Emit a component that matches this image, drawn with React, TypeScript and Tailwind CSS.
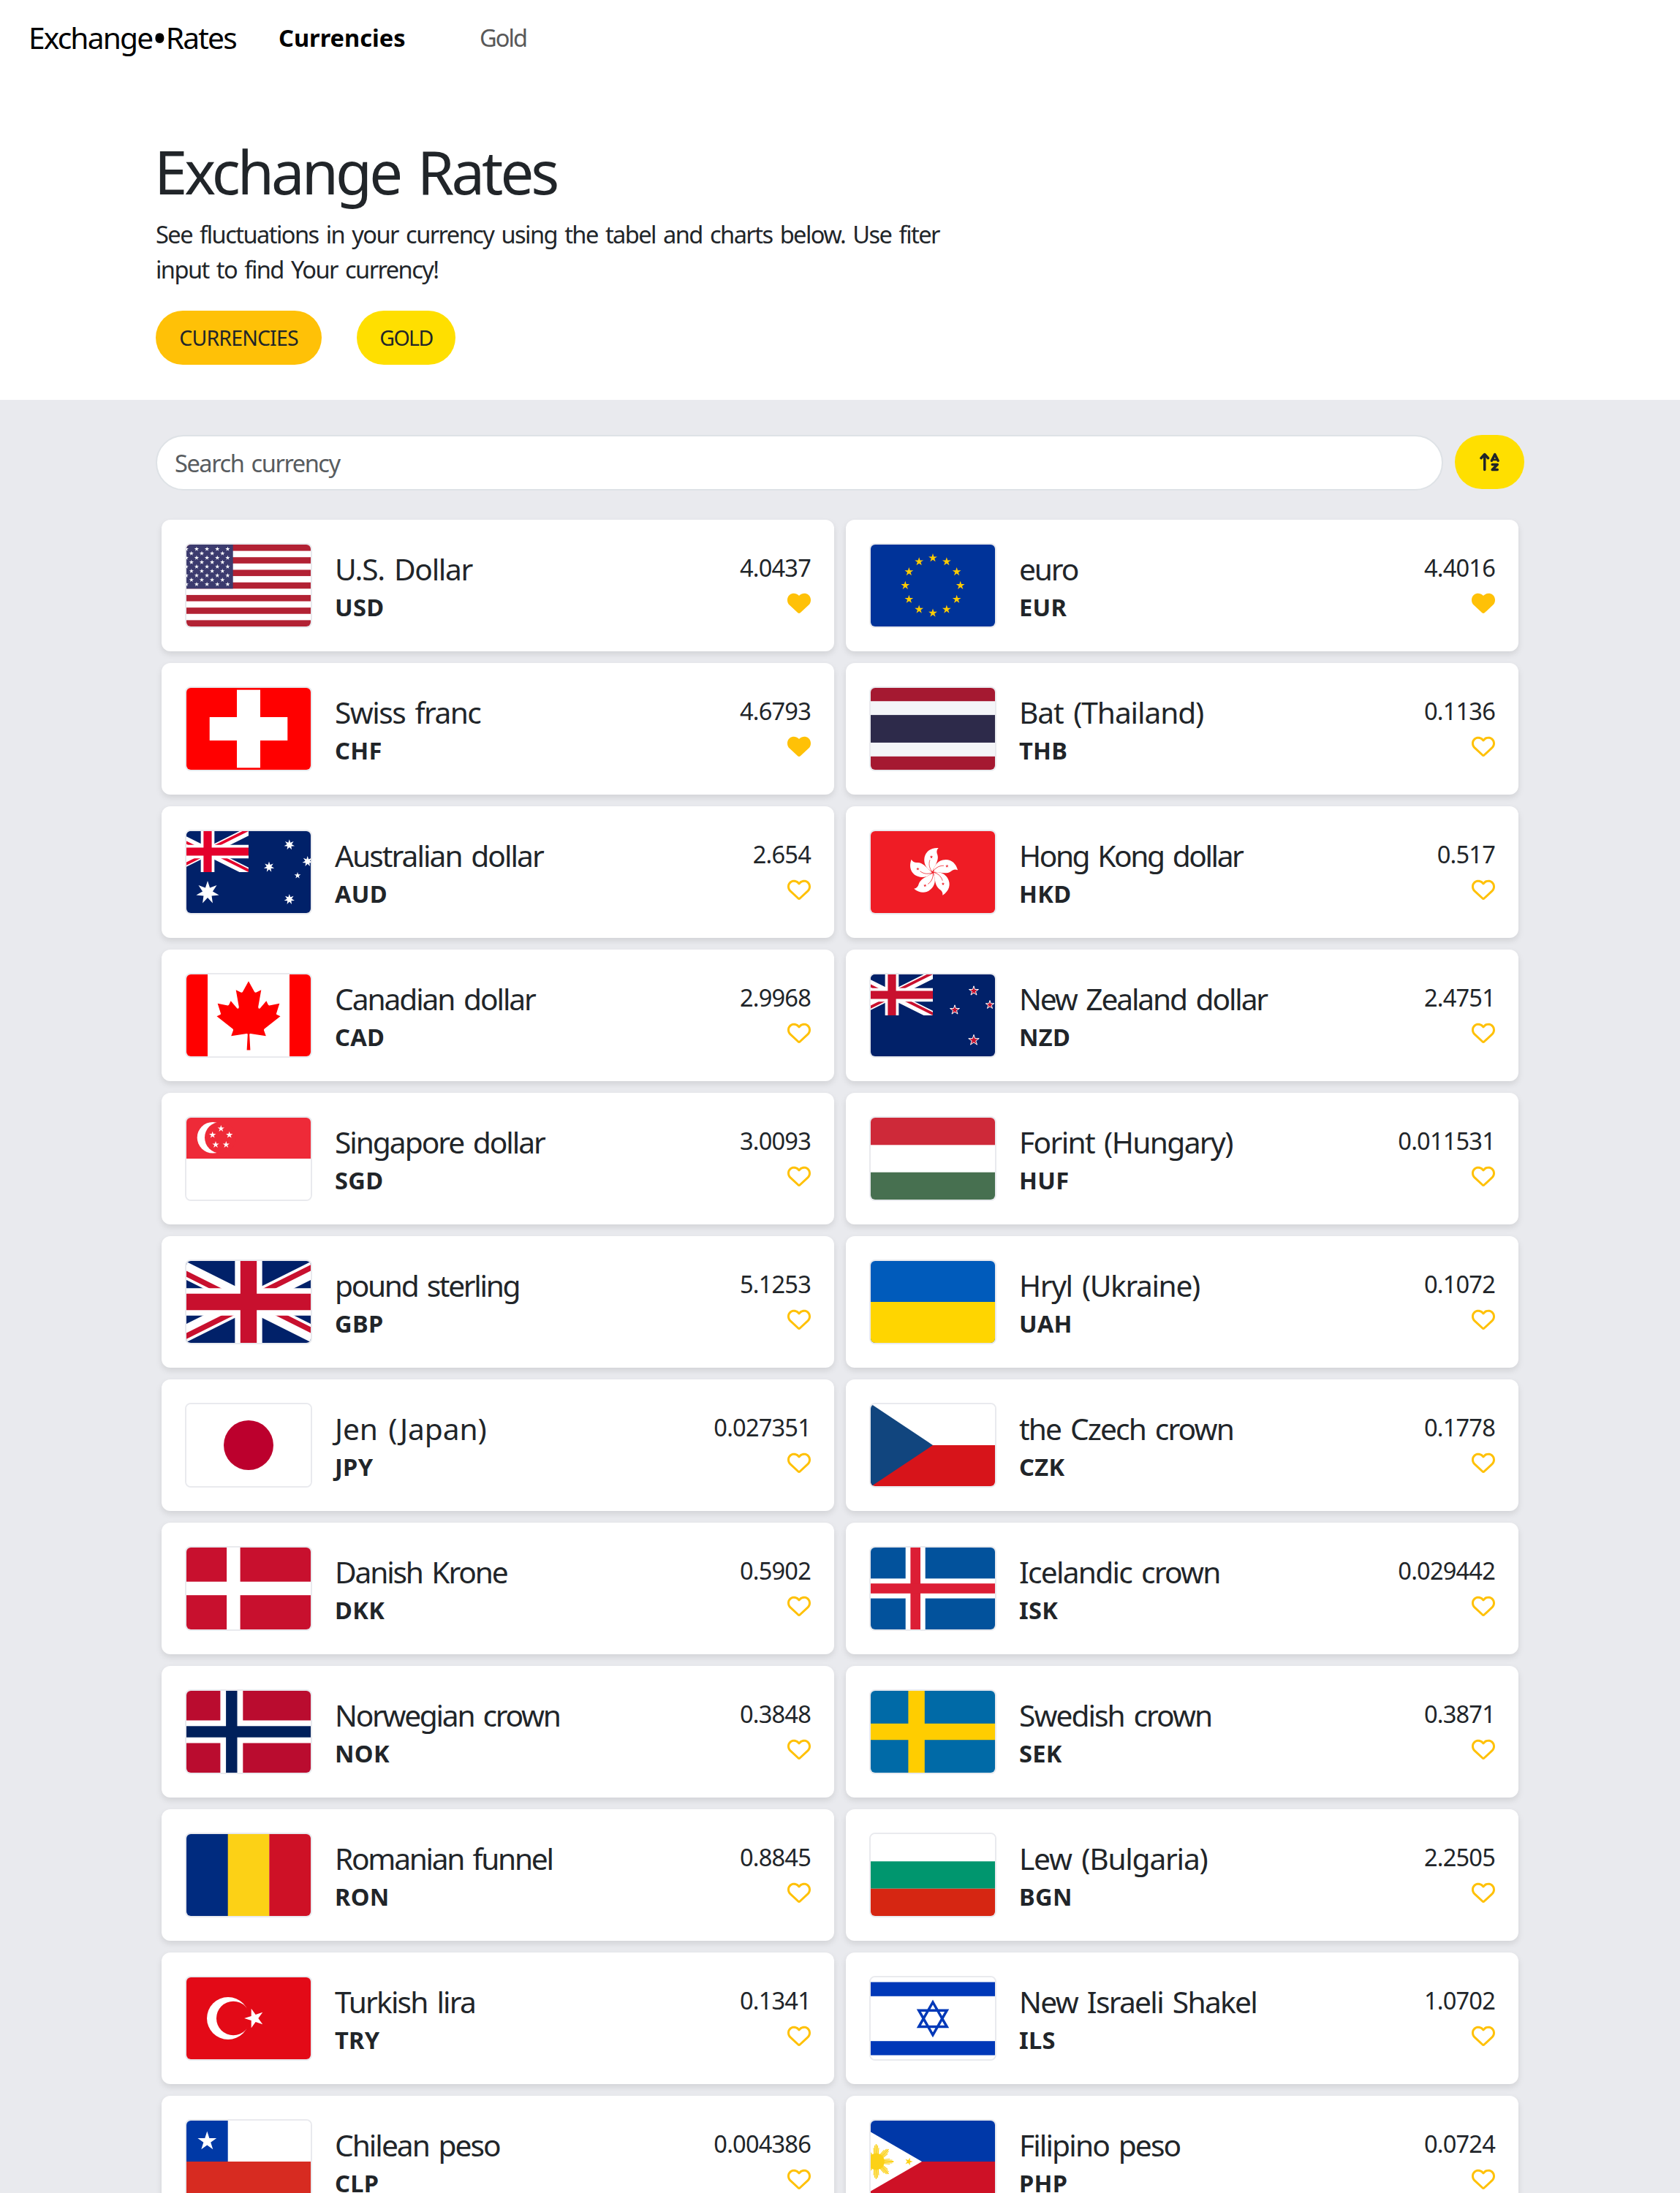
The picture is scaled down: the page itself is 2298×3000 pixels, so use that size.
import React from "react";
import { FaArrowUpAZ, FaHeart, FaRegHeart } from "react-icons/fa6";

function starPoints(cx: number, cy: number, r: number, n = 5, rotation = -90, inner = 0.382): string {
  const points: string[] = [];
  for (let i = 0; i < n * 2; i++) {
    const radius = i % 2 === 0 ? r : r * inner;
    const a = ((rotation + (i * 180) / n) * Math.PI) / 180;
    points.push(`${(cx + radius * Math.cos(a)).toFixed(2)},${(cy + radius * Math.sin(a)).toFixed(2)}`);
  }
  return points.join(" ");
}

type StarProps = { x: number; y: number; r: number; n?: number; rot?: number; inner?: number; fill?: string; stroke?: string; sw?: number };
const Star = ({ x, y, r, n, rot, inner, fill = "#fff", stroke, sw }: StarProps) => (
  <polygon points={starPoints(x, y, r, n, rot, inner)} fill={fill} stroke={stroke} strokeWidth={sw} />
);

const R = ({ x = 0, y = 0, w = 170, h = 112, c }: { x?: number; y?: number; w?: number; h?: number; c: string }) => (
  <rect x={x} y={y} width={w} height={h} fill={c} />
);

const Jack = ({ id, red, blue = "#012169" }: { id: string; red: string; blue?: string }) => (
  <g>
    <clipPath id={id + "-frame"}><path d="M0 0h60v30H0z" /></clipPath>
    <clipPath id={id + "-turn"}><path d="M30 15h30v15zv15H0zH0V0zV0h30z" /></clipPath>
    <g clipPath={`url(#${id}-frame)`}>
      <path d="M0 0h60v30H0z" fill={blue} />
      <path d="M0 0l60 30M60 0L0 30" stroke="#fff" strokeWidth="6" />
      <path d="M0 0l60 30M60 0L0 30" stroke={red} strokeWidth="4" clipPath={`url(#${id}-turn)`} />
      <path d="M30 0v30M0 15h60" stroke="#fff" strokeWidth="10" />
      <path d="M30 0v30M0 15h60" stroke={red} strokeWidth="6" />
    </g>
  </g>
);

function usStars() {
  const out: React.ReactNode[] = [];
  for (let row = 0; row < 9; row++) {
    const count = row % 2 === 0 ? 6 : 5;
    for (let i = 0; i < count; i++) {
      const x = -21.4 + 7.05 + i * 14.15 + (row % 2 === 0 ? 0 : 7.05);
      out.push(<Star key={`${row}-${i}`} x={x} y={6.05 + row * 6.03} r={3.3} />);
    }
  }
  return out;
}

const flags: Record<string, React.ReactNode> = {
  USD: (
    <>
      <R c="#fff" />
      {[0, 1, 2, 3, 4, 5, 6].map((i) => <R key={i} y={i * 17.23} h={8.615} c="#b22234" />)}
      <R w={63.7} h={60.3} c="#3c3b6e" />
      {usStars()}
    </>
  ),
  EUR: (
    <>
      <R c="#003399" />
      {Array.from({ length: 12 }, (_, i) => {
        const a = (i * Math.PI) / 6;
        return <Star key={i} x={85 + 37.7 * Math.sin(a)} y={56 - 37.7 * Math.cos(a)} r={6.2} fill="#ffcc00" />;
      })}
    </>
  ),
  CHF: (<><R c="#ff0000" /><R x={69} y={2.7} w={32} h={106.6} c="#fff" /><R x={31.7} y={40} w={106.6} h={32} c="#fff" /></>),
  THB: (<><R c="#a51931" /><R y={18.2} h={75.6} c="#f4f5f8" /><R y={37.1} h={37.8} c="#2d2a4a" /></>),
  AUD: (
    <>
      <R c="#012169" />
      <g transform="translate(-27 0) scale(1.8667)"><Jack id="au" red="#e4002b" /></g>
      <Star x={29} y={84} r={16} n={7} inner={0.444} />
      <Star x={140.8} y={18.7} r={7.4} n={7} inner={0.444} />
      <Star x={113} y={49} r={7.4} n={7} inner={0.444} />
      <Star x={165.7} y={41.4} r={7.4} n={7} inner={0.444} />
      <Star x={152} y={60.7} r={4.6} />
      <Star x={140.8} y={93.3} r={7.4} n={7} inner={0.444} />
    </>
  ),
  HKD: (
    <>
      <R c="#ef1c25" />
      {[0, 72, 144, 216, 288].map((a) => (
        <g key={a} transform={`translate(85 56.3) rotate(${a})`}>
          <path d="M-.5 -1C-6 -3 -12.4 -9 -11.7 -18C-11 -28 -3 -34 7.7 -33.3C5 -30.5 4.8 -27.5 6.3 -24C8.6 -16 3 -10 -.5 -1z" fill="#fff" />
          <path d="M0 0C-4 -4 -6.5 -10 -4 -17" fill="none" stroke="#ef1c25" strokeWidth=".7" />
          <Star x={-2} y={-21} r={2.3} fill="#ef1c25" />
        </g>
      ))}
    </>
  ),
  CAD: (
    <>
      <R c="#fff" />
      <R w={29} c="#ff0000" />
      <R x={141} w={29} c="#ff0000" />
      <path
        fill="#ff0000"
        d="M85 9.2L93 23.8Q94 25.2 95.6 24.4L102.3 21.3L98.2 44.5Q98.4 48 100.8 46.2L109.3 36.3L111.8 41.6Q112.3 42.6 113.6 42.4L127.3 39.8L123 53.4Q122.7 54.6 123.7 55L128.5 57.3L106.6 74.6Q105.6 75.4 106 76.6L108.8 84.2L87.6 80.9Q86.2 80.8 86.2 82.2L87.4 103.6H82.6L83.8 82.2Q83.8 80.8 82.4 80.9L61.2 84.2L64 76.6Q64.4 75.4 63.4 74.6L41.5 57.3L46.3 55Q47.3 54.6 47 53.4L42.7 39.8L56.4 42.4Q57.7 42.6 58.2 41.6L60.7 36.3L69.2 46.2Q71.6 48 71.8 44.5L67.7 21.3L74.4 24.4Q76 25.2 77 23.8z"
      />
    </>
  ),
  NZD: (
    <>
      <R c="#012169" />
      <g transform="translate(-27 0) scale(1.8667)"><Jack id="nz" red="#c8102e" /></g>
      <Star x={141} y={22.6} r={6.8} fill="#c8102e" stroke="#fff" sw={1} />
      <Star x={115} y={48.6} r={6.8} fill="#c8102e" stroke="#fff" sw={1} />
      <Star x={163} y={41.6} r={6} fill="#c8102e" stroke="#fff" sw={1} />
      <Star x={141} y={90} r={7.6} fill="#c8102e" stroke="#fff" sw={1} />
    </>
  ),
  SGD: (
    <>
      <R c="#fff" />
      <R h={56} c="#ee2a38" />
      <circle cx="36" cy="27.2" r="21.3" fill="#fff" />
      <circle cx="46.4" cy="27.2" r="21.4" fill="#ee2a38" />
      {[[47.3, 15], [35.7, 23.6], [58.7, 23.6], [40, 37], [54.3, 37]].map(([x, y]) => <Star key={x} x={x} y={y} r={4.9} />)}
    </>
  ),
  HUF: (<><R c="#fff" /><R h={37.3} c="#ce2939" /><R y={74.7} h={37.3} c="#477050" /></>),
  GBP: (<g transform="translate(-27 0) scale(3.7333)"><Jack id="gb" red="#c8102e" /></g>),
  UAH: (<><R c="#005bbb" /><R y={56} h={56} c="#ffd500" /></>),
  JPY: (<><R c="#fff" /><circle cx="85" cy="56" r="34" fill="#bc002d" /></>),
  CZK: (<><R c="#fff" /><R y={56} h={56} c="#d7141a" /><path d="M0 -.7L85 56L0 112.7z" fill="#11457e" /></>),
  DKK: (<><R c="#c8102e" /><R x={55.1} w={18.5} c="#fff" /><R y={46.7} h={18.5} c="#fff" /></>),
  ISK: (
    <>
      <R c="#02529c" /><R x={47.7} w={27} c="#fff" /><R y={42.4} h={27.2} c="#fff" />
      <R x={54.4} w={13.6} c="#dc1e35" /><R y={49.2} h={13.6} c="#dc1e35" />
    </>
  ),
  NOK: (
    <>
      <R c="#ba0c2f" /><R x={46.4} w={30.9} c="#fff" /><R y={40.5} h={31} c="#fff" />
      <R x={54.1} w={15.4} c="#00205b" /><R y={48.3} h={15.4} c="#00205b" />
    </>
  ),
  SEK: (<><R c="#006aa7" /><R x={51.4} w={22.4} c="#ffcd00" /><R y={44.8} h={22.4} c="#ffcd00" /></>),
  RON: (<><R w={57} c="#002b7f" /><R x={56.7} w={56.6} c="#fcd116" /><R x={113.3} w={56.7} c="#ce1126" /></>),
  BGN: (<><R c="#fff" /><R y={37.3} h={37.4} c="#00966e" /><R y={74.7} h={37.3} c="#d62612" /></>),
  TRY: (
    <>
      <R c="#e30a17" />
      <circle cx="57" cy="56" r="29" fill="#fff" />
      <circle cx="64.2" cy="56" r="23.2" fill="#e30a17" />
      <Star x={93} y={56} r={13.9} rot={180} />
    </>
  ),
  ILS: (
    <>
      <R c="#fff" /><R y={6.5} h={19.3} c="#0038b8" /><R y={87.2} h={19.3} c="#0038b8" />
      <path d="M85 34L104.2 67.6H65.8zM85 78.8L65.8 45.2H104.2z" fill="none" stroke="#0038b8" strokeWidth="3.5" />
    </>
  ),
  CLP: (<><R c="#fff" /><R w={56.7} h={56} c="#0039a6" /><R y={56} h={56} c="#d72b21" /><Star x={28.3} y={28.2} r={13.6} /></>),
  PHP: (
    <>
      <R h={56} c="#0038a8" />
      <R y={56} h={56} c="#ce1126" />
      <path d="M-27 0L70 56L-27 112z" fill="#fff" />
      <circle cx="7.5" cy="56" r="11.3" fill="#fcd116" />
      {[0, 45, 90, 135, 180, 225, 270, 315].map((a) => (
        <g key={a} transform={`translate(7.5 56) rotate(${a})`}>
          <path d="M10 -2L22 -2.6L22 -1.4L10 -.9zM10 -.7L23.8 -.9V.9L10 .7zM10 2L22 2.6L22 1.4L10 .9zM10 -3.3L19 -4L18.5 -2.9L10 -2.2zM10 3.3L19 4L18.5 2.9L10 2.2z" fill="#fcd116" />
        </g>
      ))}
      <Star x={52} y={56} r={5.6} rot={0} fill="#fcd116" />
    </>
  ),
};

type Currency = { name: string; code: string; rate: string; tracking: string; favorite?: boolean };

const currencies: Currency[] = [
  { name: "U.S. Dollar", code: "USD", rate: "4.0437", tracking: "tracking-[-0.033em]", favorite: true },
  { name: "euro", code: "EUR", rate: "4.4016", tracking: "tracking-[-0.052em]", favorite: true },
  { name: "Swiss franc", code: "CHF", rate: "4.6793", tracking: "tracking-[-0.037em]", favorite: true },
  { name: "Bat (Thailand)", code: "THB", rate: "0.1136", tracking: "tracking-[-0.027em]" },
  { name: "Australian dollar", code: "AUD", rate: "2.654", tracking: "tracking-[-0.048em]" },
  { name: "Hong Kong dollar", code: "HKD", rate: "0.517", tracking: "tracking-[-0.06em]" },
  { name: "Canadian dollar", code: "CAD", rate: "2.9968", tracking: "tracking-[-0.051em]" },
  { name: "New Zealand dollar", code: "NZD", rate: "2.4751", tracking: "tracking-[-0.052em]" },
  { name: "Singapore dollar", code: "SGD", rate: "3.0093", tracking: "tracking-[-0.05em]" },
  { name: "Forint (Hungary)", code: "HUF", rate: "0.011531", tracking: "tracking-[-0.04em]" },
  { name: "pound sterling", code: "GBP", rate: "5.1253", tracking: "tracking-[-0.057em]" },
  { name: "Hryl (Ukraine)", code: "UAH", rate: "0.1072", tracking: "tracking-[-0.034em]" },
  { name: "Jen (Japan)", code: "JPY", rate: "0.027351", tracking: "tracking-[-0.003em]" },
  { name: "the Czech crown", code: "CZK", rate: "0.1778", tracking: "tracking-[-0.046em]" },
  { name: "Danish Krone", code: "DKK", rate: "0.5902", tracking: "tracking-[-0.053em]" },
  { name: "Icelandic crown", code: "ISK", rate: "0.029442", tracking: "tracking-[-0.043em]" },
  { name: "Norwegian crown", code: "NOK", rate: "0.3848", tracking: "tracking-[-0.056em]" },
  { name: "Swedish crown", code: "SEK", rate: "0.3871", tracking: "tracking-[-0.048em]" },
  { name: "Romanian funnel", code: "RON", rate: "0.8845", tracking: "tracking-[-0.056em]" },
  { name: "Lew (Bulgaria)", code: "BGN", rate: "2.2505", tracking: "tracking-[-0.03em]" },
  { name: "Turkish lira", code: "TRY", rate: "0.1341", tracking: "tracking-[-0.045em]" },
  { name: "New Israeli Shakel", code: "ILS", rate: "1.0702", tracking: "tracking-[-0.042em]" },
  { name: "Chilean peso", code: "CLP", rate: "0.004386", tracking: "tracking-[-0.049em]" },
  { name: "Filipino peso", code: "PHP", rate: "0.0724", tracking: "tracking-[-0.046em]" },
];

function CurrencyCard({ name, code, rate, tracking, favorite }: Currency) {
  return (
    <div className="flex h-[180px] items-start rounded-[12px] bg-white p-8 shadow-[0_4px_8px_rgba(0,0,0,0.1)]">
      <div className="h-[116px] w-[174px] shrink-0 overflow-hidden rounded-[8px] border-2 border-[#e9eaee]">
        <svg viewBox="0 0 170 112" className="block h-[112px] w-[170px]">{flags[code]}</svg>
      </div>
      <div className="ml-[31px] pt-[11px]">
        <div className={`text-[40.7px] leading-[48px] whitespace-nowrap [word-spacing:0.1em] ${tracking}`}>{name}</div>
        <div className="mt-[5px] text-[32.6px] leading-[48px] font-bold tracking-[0.01em]">{code}</div>
      </div>
      <div className="ml-auto flex flex-col items-end pt-[10px]">
        <div className="text-[32.6px] leading-[48px] tracking-[-0.025em]">{rate}</div>
        {favorite ? (
          <FaHeart className="mt-[8px] size-8 text-[#ffc107]" />
        ) : (
          <FaRegHeart className="mt-[8px] size-8 text-[#ffc107]" />
        )}
      </div>
    </div>
  );
}

export default function App() {
  return (
    <div className="h-[3000px] overflow-hidden bg-[#e9eaee] font-['Noto_Sans',sans-serif] text-[#212529]">
      <header className="h-[547px] bg-white">
        <nav className="flex h-[103px] items-start pl-[39px]">
          <a className="mt-[21px] w-[342px] text-[40.7px] leading-[60px] tracking-[-0.045em] whitespace-nowrap text-black">
            Exchange<span className="relative top-[5px] text-[54px] leading-[0]">•</span>Rates
          </a>
          <a className="mt-[28px] w-[275px] text-[32.6px] leading-[48px] font-bold text-black">Currencies</a>
          <a className="mt-[28px] text-[32.6px] leading-[48px] tracking-[-0.06em] text-[#595959]">Gold</a>
        </nav>
        <div className="mx-auto w-[1872px] pt-[84px]">
          <h1 className="-ml-[2px] text-[81.4px] leading-[96px] tracking-[-0.049em] [word-spacing:0.08em]">Exchange Rates</h1>
          <p className="mt-[14px] text-[32.6px] leading-[48px] tracking-[-0.048em] [word-spacing:0.1em]">
            See fluctuations in your currency using the tabel and charts below. Use fiter
            <br />
            input to find Your currency!
          </p>
          <div className="mt-8 flex gap-12">
            <button className="h-[74px] w-[227px] rounded-full bg-[#ffc107] text-[28.5px] tracking-[-0.03em]">CURRENCIES</button>
            <button className="h-[74px] w-[135px] rounded-full bg-[#ffdf00] text-[28.5px] tracking-[-0.055em]">GOLD</button>
          </div>
        </div>
      </header>
      <main className="mx-auto w-[1872px] pt-12">
        <div className="flex items-start gap-4">
          <input
            placeholder="Search currency"
            className="h-[76px] flex-1 rounded-full border-2 border-[#dee2e6] bg-white px-6 text-[32.6px] tracking-[-0.045em] [word-spacing:0.1em] placeholder:text-[#585c5f]"
          />
          <button className="flex h-[74px] w-[95px] items-center justify-center rounded-full bg-[#ffdf00]">
            <FaArrowUpAZ className="h-[28px] w-[31.5px]" />
          </button>
        </div>
        <div className="mt-10 grid grid-cols-2 gap-4 px-2">
          {currencies.map((c) => (
            <CurrencyCard key={c.code} {...c} />
          ))}
        </div>
      </main>
    </div>
  );
}
